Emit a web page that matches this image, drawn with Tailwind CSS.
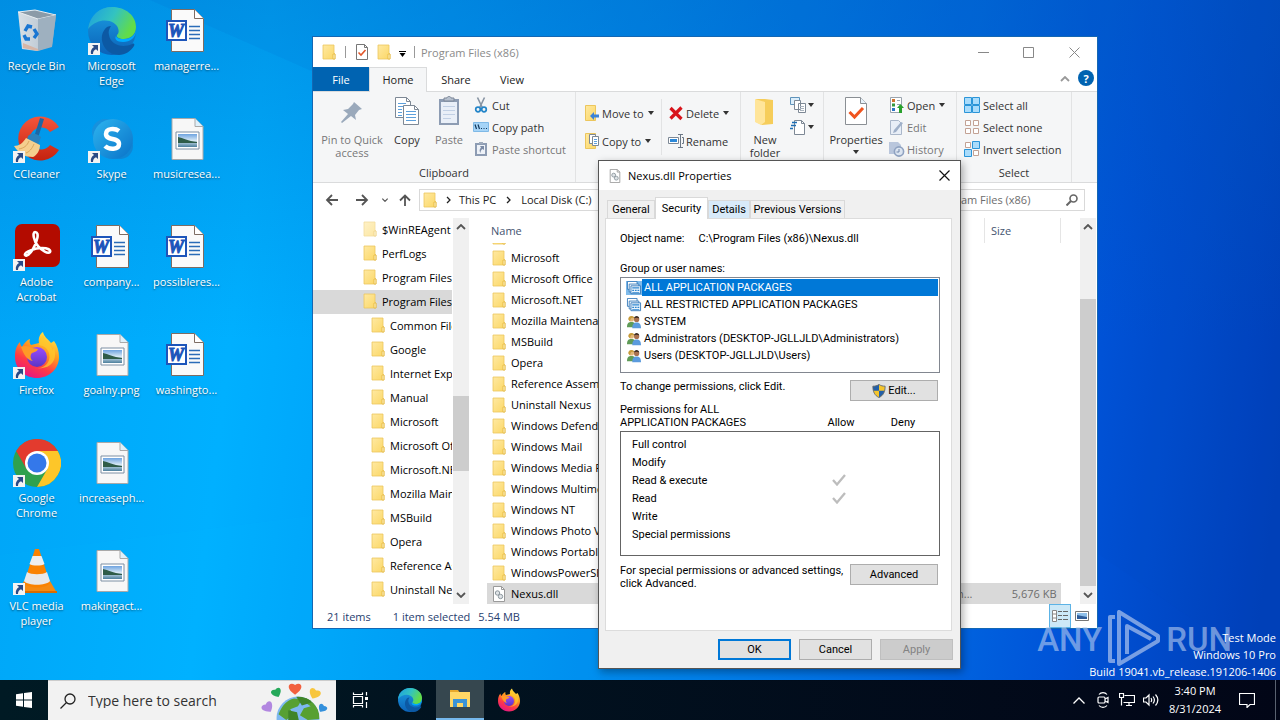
<!DOCTYPE html>
<html lang="en">
<head>
  <meta charset="UTF-8" />
  <meta name="viewport" content="width=device-width, initial-scale=1" />
  <title>Desktop</title>
  <script src="https://cdn.jsdelivr.net/npm/@tailwindcss/browser@4"></script>
</head>
<body class="flex min-h-screen flex-col overflow-hidden bg-[#0078d7] font-['Open_Sans','Noto_Sans',sans-serif] text-[11px] leading-[15px] text-black">

  <!-- icon sprite -->
  <svg class="absolute size-0" aria-hidden="true">
    <defs>
      <linearGradient id="g-folder" x1="0" y1="0" x2="1" y2="1"><stop offset="0" stop-color="#ffe9a2"/><stop offset="1" stop-color="#fbd765"/></linearGradient>
      <linearGradient id="g-edge1" x1="0" y1="0" x2="1" y2=".4"><stop offset="0" stop-color="#1b9de2"/><stop offset=".55" stop-color="#33c3c0"/><stop offset="1" stop-color="#62dc49"/></linearGradient>
      <linearGradient id="g-edge2" x1="0" y1="0" x2="0" y2="1"><stop offset="0" stop-color="#1b9de2"/><stop offset="1" stop-color="#0b62b8"/></linearGradient>
      <linearGradient id="g-bin" x1="0" y1="0" x2="1" y2="0"><stop offset="0" stop-color="#d8e0e6"/><stop offset=".5" stop-color="#c3ced8"/><stop offset="1" stop-color="#8fa3b3"/></linearGradient>
      <linearGradient id="g-cc" x1="0" y1="0" x2="0" y2="1"><stop offset="0" stop-color="#f4553b"/><stop offset="1" stop-color="#c5220f"/></linearGradient>
      <linearGradient id="g-skype" x1="0" y1="0" x2="1" y2="1"><stop offset="0" stop-color="#2db5f0"/><stop offset="1" stop-color="#0a72c8"/></linearGradient>
      <linearGradient id="g-fox" x1=".8" y1="0" x2=".3" y2="1"><stop offset="0" stop-color="#fff04a"/><stop offset=".4" stop-color="#ff9a1f"/><stop offset=".7" stop-color="#ff3a45"/><stop offset="1" stop-color="#e31587"/></linearGradient>
      <linearGradient id="g-fox2" x1="0" y1="0" x2="0" y2="1"><stop offset="0" stop-color="#9a4cff"/><stop offset="1" stop-color="#5b35c4"/></linearGradient>
      <linearGradient id="g-pic" x1="0" y1="0" x2="0" y2="1"><stop offset="0" stop-color="#6ea3e0"/><stop offset=".5" stop-color="#d6e8f5"/><stop offset="1" stop-color="#4c7f9c"/></linearGradient>
    </defs>

    <symbol id="folder" viewBox="0 0 16 16">
      <path d="M2 1h11v8l1 1v5H2z" fill="url(#g-folder)" stroke="#ecc65d" stroke-width=".8"/>
      <path d="M12 10h2v5h-2z" fill="#fff0b8" stroke="#e3b640" stroke-width=".8"/>
    </symbol>
    <symbol id="dll" viewBox="0 0 16 16">
      <path d="M2.500.5h8l3 3v12h-11z" fill="#fff" stroke="#9a9a9a"/>
      <path d="M10.500.5v3h3" fill="none" stroke="#9a9a9a"/>
      <circle cx="6.500" cy="7" r="2.200" fill="#dfe3e6" stroke="#8c979e"/><circle cx="9.500" cy="10.500" r="2.200" fill="#dfe3e6" stroke="#8c979e"/>
    </symbol>
    <symbol id="shortcut" viewBox="0 0 12 12">
      <path d="M0 0h12v12H0z" fill="#f3f3f3"/><path d="M4 2h6v6L8 6.200C6 7 5 8.500 5 11H3C2.300 8 3.500 5.500 6 4z" fill="#2a4a86"/>
    </symbol>

    <symbol id="bin" viewBox="0 0 48 48">
      <path d="M5 5l38 3-4 31-15 5-15-2z" fill="url(#g-bin)"/>
      <path d="M5 5l17-2 21 5-18 4z" fill="#8b9ba8" stroke="#e9eef2"/>
      <path d="M25 12l18-4-4 32-14 4z" fill="#9eb0bf"/><path d="M10 36l15 6v2l-15-3z" fill="#d6b6a7"/>
      <g fill="none" stroke="#1976d2" stroke-width="3.400"><path d="M12 24l3-5 4 1"/><path d="M21 22l3 5-3 4"/><path d="M17 32h-4l-2-4"/></g>
    </symbol>
    <symbol id="edge" viewBox="0 0 48 48">
      <circle cx="24" cy="24" r="24" fill="url(#g-edge2)"/>
      <path d="M0 22C2 8 12 0 24 0c14 0 24 9 24 20 0 8-6 12-12 12-5 0-8-2-7-4 2-2 2-4 1-7C28 14 12 8 0 22z" fill="url(#g-edge1)"/>
      <path d="M17 22c-8 10 0 26 14 26 6 0 12-4 15-9 1-2 0-3-2-2-10 5-22 0-23-9-1-3 0-6 2-9-2 0-5 1-6 3z" fill="#0c59a4"/>
      <path d="M48 23c0 8-6 12-13 12-6 0-9-3-7-6 1 3 5 3 8 3 6 0 11-3 12-9z" fill="#00aaff"/>
    </symbol>
    <symbol id="word" viewBox="0 0 48 48">
      <path d="M8.500 2.500h23l9 9v33h-32z" fill="#fafafa" stroke="#7d6c63"/><path d="M31.500 2.500v9h9" fill="#fff" stroke="#7d6c63"/>
      <path d="M26 19.500h11M26 23.500h11M26 27.500h11M26 31.500h11" stroke="#2b6cb8" stroke-width="1.300"/>
      <path d="M3 13h21v21H3z" fill="#1d55ba"/><path d="M5 15h17v17H5z" fill="#fff"/>
      <text x="13" y="29.500" font-family="Liberation Serif, serif" font-style="italic" font-weight="700" font-size="18" text-anchor="middle" fill="#1d55ba" stroke="#1d55ba" stroke-width="1">W</text>
    </symbol>
    <symbol id="picture" viewBox="0 0 48 48">
      <path d="M9 3.500h23l8 8v33H9z" fill="#f7f7f7" stroke="#a9a9a9"/><path d="M32 3.500v8h8" fill="#dff0fa" stroke="#a9a9a9"/>
      <path d="M13 17h23v17H13z" fill="#fff" stroke="#7d8fa3"/><path d="M15 19h19v13H15z" fill="url(#g-pic)"/>
      <path d="M15 22c5 1 10 4 19 5v1H15z" fill="#2f5c48"/>
    </symbol>
    <symbol id="ccleaner" viewBox="0 0 48 48">
      <path d="M46 12A22 22 0 1 0 46 35l-9-5A11 11 0 1 1 37 17z" fill="url(#g-cc)"/>
      <path d="M27 3l4 1-6 19-4-1z" fill="#1c67a5"/><path d="M15 21c4-4 8-3 13 1l-3 8-11-5z" fill="#2a82bd"/>
      <path d="M13 23l14 7c0 6-4 11-7 12-8 0-14-3-19-11 5 0 9-3 12-8z" fill="#f5cf8e"/><path d="M16 26c-2 5-5 7-10 8M21 29c-2 5-5 8-8 9" stroke="#d9a55c" fill="none"/>
    </symbol>
    <symbol id="skype" viewBox="0 0 48 48">
      <circle cx="17" cy="17" r="13" fill="#1791dd"/><circle cx="32" cy="31" r="13" fill="#0f86d4"/><circle cx="25" cy="24" r="20" fill="url(#g-skype)"/>
      <path d="M31 16c-4-3-13-3-13 3 0 7 13 3 13 10 0 6-10 6-14 2" fill="none" stroke="#fff" stroke-width="4.500"/>
    </symbol>
    <symbol id="acrobat" viewBox="0 0 48 48">
      <rect x="2" y="1" width="45" height="43" rx="7" fill="#b30b00"/>
      <path d="M22 9c5 0 2 10-2 17-3 5-7 8-8 6-1-3 10-7 17-7 6 0 9 2 8 4-2 2-8-1-12-6-4-4-6-14-3-14z" fill="none" stroke="#fff" stroke-width="2.600"/>
    </symbol>
    <symbol id="firefox" viewBox="0 0 48 48">
      <path d="M46 26c0 12-10 21-22 21S2 38 2 26c0-6 1-11 5-15 0 2 1 4 2 5 2-4 5-7 8-8-1 3 0 5 1 6l8-2c-1-5 1-9 4-11 1 5 5 7 8 11l3-2c3 4 5 10 5 16z" fill="url(#g-fox)"/>
      <circle cx="24" cy="26" r="10" fill="url(#g-fox2)"/>
      <path d="M8 16c4-2 8-1 11 1l6 1c-1 3-4 3-6 4-2 2-2 6 1 8-6-1-9-6-12-14z" fill="#ff9a26"/>
      <path d="M26 14c8 1 12 8 10 15-2 6-8 9-14 8 16 2 23-8 19-20-1 1-1 2-1 3-3-8-7-9-10-16-2 3-4 6-4 10z" fill="#ffca2c" fill-opacity=".75"/>
    </symbol>
    <symbol id="chrome" viewBox="0 0 48 48">
      <circle cx="24" cy="24" r="24" fill="#2fa14f"/>
      <path d="M24 24L3.200 12A24 24 0 0 1 44.800 12z" fill="#e33b2e"/><path d="M24 12h20.800A24 24 0 0 1 24 48l10.400-18z" fill="#fdc629"/>
      <path d="M3.200 12L13.600 30 24 24V12z" fill="#e33b2e"/>
      <circle cx="24" cy="24" r="12" fill="#fff"/><circle cx="24" cy="24" r="9.500" fill="#3478ea"/>
    </symbol>
    <symbol id="vlc" viewBox="0 0 48 48">
      <path d="M11 34h26l7 12H4z" fill="#f58a12"/><path d="M4 46h40v-2H5z" fill="#d96c00"/>
      <path d="M22 2h4l11 34c-4 6-22 6-26 0z" fill="#fa8200"/>
      <path d="M19.500 9h9l3 8c-3 2-12 2-15 0z" fill="#eee"/><path d="M14 25c4 3 16 3 20 0l3 9c-4 5-22 5-26 0z" fill="#e8e8e8"/>
    </symbol>

    <symbol id="pin" viewBox="0 0 32 32"><path d="M18 7l8 7-3 1-4 5 1 5-5-4-9 7-1-1 7-8-5-4 5-1 5-5z" fill="#9aa9bb"/></symbol>
    <symbol id="copy" viewBox="0 0 32 32">
      <g fill="#fff" stroke="#7d8895"><path d="M4.500 2.500h11l4 4v16h-15z"/><path d="M12.500 10.500h11l4 4v15h-15z"/></g>
      <path d="M7 8.500h8M7 11.500h5M7 14.500h4M7 17.500h4M7 20.500h4M15 16.500h10M15 19.500h10M15 22.500h10M15 25.500h10" stroke="#5da0dc"/><path d="M15.500 2.500v4h4M23.500 10.500v4h4" fill="none" stroke="#7d8895"/>
    </symbol>
    <symbol id="paste" viewBox="0 0 32 32">
      <path d="M6 4h20v26H6z" fill="#8d9cb3"/><path d="M8 7h16v21H8z" fill="#e9eff8"/><path d="M11 6V3h3c0-2 4-2 4 0h3v3z" fill="#b6c0ce" stroke="#7c8798"/>
      <path d="M10 11.500h12M10 15.500h12M10 19.500h12M10 23.500h8" stroke="#c1d0e5"/>
    </symbol>
    <symbol id="cut" viewBox="0 0 16 16"><path d="M4.500.5L9.500 11M11.500.5L6.500 11" stroke="#8794a3" stroke-width="1.600"/><g fill="none" stroke="#2385c9" stroke-width="1.700"><circle cx="5" cy="12.500" r="2.300"/><circle cx="11" cy="12.500" r="2.300"/></g></symbol>
    <symbol id="copypath" viewBox="0 0 16 16"><path d="M.5 3.500h15v9h-15z" fill="#a6d4f7" stroke="#7fb9e6"/><path d="M2 5.500l1.500 4.500M5 5.500l1.500 4.500M8 9.500h1M10.500 9.500h1M13 9.500h1" stroke="#12385c" stroke-width="1.200"/></symbol>
    <symbol id="pasteshort" viewBox="0 0 16 16"><path d="M2 2h12v13H2z" fill="#8d9cb3"/><path d="M4 4h8v9H4z" fill="#eef2f8"/><path d="M6 1h4v2H6z" fill="#9fabbc"/><path d="M7 5h4v4L9.500 8C8 9 7.500 10 7.500 12 6 10 6.500 8 8 6.500z" fill="#7b8ba6"/></symbol>
    <symbol id="moveto" viewBox="0 0 16 16"><path d="M1.500.5h10v15h-10z" fill="url(#g-folder)" stroke="#ecc65d"/><path d="M6 11l4-4v2.500h5v3h-5V15z" fill="#3c82d6"/></symbol>
    <symbol id="copyto" viewBox="0 0 16 16"><path d="M1.500.5h10v15h-10z" fill="url(#g-folder)" stroke="#ecc65d"/><path d="M5.500 1.500h6v9h-6z" fill="#fff" stroke="#7d8895"/><path d="M8.500 3.500h6v9h-6z" fill="#fff" stroke="#7d8895"/><path d="M10 6.500h3M10 8.500h3M10 10.500h3" stroke="#5da0dc"/></symbol>
    <symbol id="delete" viewBox="0 0 16 16"><path d="M2.500 3l11 11M13.500 2.500l-11 11" stroke="#d8141c" stroke-width="3.200"/></symbol>
    <symbol id="rename" viewBox="0 0 16 16"><path d="M.5 4.500h10v6H.5z" fill="#fff" stroke="#7d8895"/><path d="M2 6h7v3H2z" fill="#2b88d8"/><path d="M10 1.500h5M10 14.500h5M12.500 2v12M14 4.500h1.500v6H14" fill="none" stroke="#6b7785"/></symbol>
    <symbol id="bigfolder" viewBox="0 0 32 32"><path d="M7 4h9l8 1v24l-11 1-6-3z" fill="#f6cd5a"/><path d="M6 4l10 3v20l-4 3-6-3z" fill="#ffe59a"/></symbol>
    <symbol id="newitem" viewBox="0 0 16 16"><path d="M.5.5h9v7h-9z" fill="#dceefb" stroke="#5f93bb"/><path d="M4.500 3.500h6v9h-6zM8.500 6.500h7v9h-7z" fill="#fff" stroke="#7d8895"/><path d="M10 9.500h4M10 11.500h4M10 13.500h4" stroke="#aab4bf"/></symbol>
    <symbol id="easy" viewBox="0 0 16 16"><path d="M4.500 1.500h7l3 3v11h-10z" fill="#fff" stroke="#7d8895"/><path d="M11.500 1.500v3h3" fill="none" stroke="#7d8895"/><path d="M2 3.500h5M1 6.500h5M0 9.500h3" stroke="#1f6fb5" stroke-width="1.400"/></symbol>
    <symbol id="props" viewBox="0 0 32 32"><path d="M5.500 2.500h15l6 6v21h-21z" fill="#fff" stroke="#8a8f94"/><path d="M20.500 2.500v6h6" fill="#e8f3fb" stroke="#8a8f94"/><path d="M9.500 17l5 5 8.500-9" fill="none" stroke="#f0541e" stroke-width="3"/></symbol>
    <symbol id="props-small" viewBox="0 0 16 16"><path d="M2.500.5h8l3 3v12h-11z" fill="#fff" stroke="#777"/><path d="M10.500.5v3h3" fill="none" stroke="#777"/><path d="M4.500 8.500l2.500 2.500 4.500-5" fill="none" stroke="#e2572b" stroke-width="1.600"/></symbol>
    <symbol id="open" viewBox="0 0 16 16"><path d="M1.500.5h11v15h-11z" fill="#fff" stroke="#9aa4ae"/><path d="M3 2h3v3H3z" fill="#d1722c"/><path d="M3 6.500h3v3H3z" fill="#35993f"/><path d="M3 11h3v3H3z" fill="#2c75c4"/><path d="M8 3.500h3M8 7.500h3" stroke="#9aa4ae"/><path d="M8 11l3.500-4L15 11h-2v5h-3v-5z" fill="#29a12d"/></symbol>
    <symbol id="edit" viewBox="0 0 16 16"><path d="M1.500 1.500h8l3 3v11h-11z" fill="#e8eef7" stroke="#aab7ca"/><path d="M14 4L7 13l-3 1 1-3 7-8z" fill="#9fb0c9"/></symbol>
    <symbol id="history" viewBox="0 0 16 16"><path d="M0 1h9l3 3v9H0z" fill="#b9c6dc"/><circle cx="10" cy="10.500" r="4.600" fill="#dbe4f0" stroke="#8fa2c1" stroke-width="1.600"/><path d="M10 8v3H7.500" fill="none" stroke="#7287aa"/></symbol>
    <symbol id="selall" viewBox="0 0 16 16"><path d="M.5.5h7v7h-7zM8.500.5h7v7h-7zM.5 8.500h7v7h-7zM8.500 8.500h7v7h-7z" fill="#aadcfb" stroke="#2b95d8"/></symbol>
    <symbol id="selnone" viewBox="0 0 16 16"><path d="M1.500 1.500h5v5h-5zM9.500 1.500h5v5h-5zM1.500 9.500h5v5h-5zM9.500 9.500h5v5h-5z" fill="#fff" stroke="#c3a294"/></symbol>
    <symbol id="selinv" viewBox="0 0 16 16"><path d="M1.500 1.500h5v5h-5zM9.500 9.500h5v5h-5z" fill="#fff" stroke="#c3a294"/><path d="M8.500.5h7v7h-7zM.5 8.500h7v7h-7z" fill="#aadcfb" stroke="#2b95d8"/></symbol>
    <symbol id="caret" viewBox="0 0 6 4"><path d="M0 0h6L3 4z" fill="currentColor"/></symbol>
    <symbol id="chev-up" viewBox="0 0 10 6"><path d="M1 5l4-4 4 4" fill="none" stroke="currentColor" stroke-width="1.800"/></symbol>
    <symbol id="chev-down" viewBox="0 0 10 6"><path d="M1 1l4 4 4-4" fill="none" stroke="currentColor" stroke-width="1.800"/></symbol>
    <symbol id="chev-right" viewBox="0 0 5 8"><path d="M1 1l3 3-3 3" fill="none" stroke="currentColor" stroke-width="1.300"/></symbol>

    <symbol id="package" viewBox="0 0 16 16"><path d="M.5.5h11v9H.5z" fill="#fff" stroke="#2f76b8"/><path d="M2.500 3.500h11v9h-11z" fill="#fff" stroke="#2f76b8"/><path d="M4.500 5.500h11v9h-11z" fill="#eaf4fc" stroke="#2f76b8"/><path d="M6 7h8v1.500H6zM6 10h2v1.500H6zM9 10h2v1.500H9zM12 10h2v1.500h-2zM6 12.500h8v1H6z" fill="#2f86cf"/></symbol>
    <symbol id="group" viewBox="0 0 16 16"><circle cx="5" cy="4.500" r="3" fill="#e3b779"/><path d="M1.500 5C1 0 9 0 8.500 4 6 2 4 3 3.500 7z" fill="#c79b3a"/><path d="M0 14c0-5 2-6 5-6s5 1 5 6z" fill="#5f9b57"/><circle cx="11" cy="5" r="3" fill="#a9714f"/><path d="M8 4c0-4 6-4 6 0-2-1-4-1-6 0z" fill="#3a2a22"/><path d="M6 15c0-5 2-6.500 5-6.500s5 1.500 5 6.500z" fill="#5b9bdd"/></symbol>
    <symbol id="shield" viewBox="0 0 16 16"><path d="M8 .5C6 2 3.500 2.500 1 2.500 1 9 3 13 8 15.500 13 13 15 9 15 2.500 12.500 2.500 10 2 8 .5z" fill="#f5c52c"/><path d="M8 .5C6 2 3.500 2.500 1 2.500c0 2 .2 3.700.7 5.200H8zM8 7.700h6.300C13.300 11.300 11.500 13.800 8 15.500z" fill="#2460a8"/><path d="M8 .5C6 2 3.500 2.500 1 2.500 1 9 3 13 8 15.500 13 13 15 9 15 2.500 12.500 2.500 10 2 8 .5z" fill="none" stroke="#5d6672"/></symbol>
    <symbol id="tick" viewBox="0 0 14 12"><path d="M1 6l4 4.500L13 1" fill="none" stroke="#bdbdbd" stroke-width="2.300"/></symbol>
  </svg>

  <main class="relative flex-1 bg-[linear-gradient(97deg,#00a4f6_0%,#00b0ff_20%,#0092f0_45%,#006ae2_72%,#0053d8_84%,#003fb8_98%)]">
    <div class="absolute inset-0 bg-linear-to-b from-[#005bb5]/30 via-transparent via-50% to-transparent"></div>
    <svg class="absolute inset-0 size-full" viewBox="0 0 1280 680" preserveAspectRatio="none" aria-hidden="true">
      <path d="M150 0h1130v680L560 180z" fill="#004fc0" fill-opacity=".08"/>
      <path d="M0 555L600 480v200H0z" fill="#00bfff" fill-opacity=".08"/>
    </svg>

    <div id="desktop" class="relative grid w-fit auto-cols-[75px] grid-flow-col grid-rows-[repeat(6,108px)]"></div>

    <!-- Explorer -->
    <section class="absolute top-[37px] left-[313px] z-10 w-[784px] bg-white shadow-[0_0_0_1px_#1467b3]" aria-label="Program Files (x86)">
      <header class="flex h-[30px] items-center pl-2 text-[#8a8a8a]">
        <svg class="size-4"><use href="#folder"/></svg>
        <span class="ml-2 h-3 w-px bg-[#999]"></span>
        <button class="ml-2" aria-label="Properties"><svg class="size-4"><use href="#props-small"/></svg></button>
        <button class="ml-1.5" aria-label="New folder"><svg class="size-4"><use href="#folder"/></svg></button>
        <button class="ml-0.5 flex w-4 flex-col items-center gap-px pt-1 text-black" aria-label="Customize toolbar"><span class="h-px w-[7px] bg-black"></span><svg class="h-1 w-[7px]"><use href="#caret"/></svg></button>
        <span class="ml-1 h-3 w-px bg-[#999]"></span>
        <h1 class="ml-1.5">Program Files (x86)</h1>
        <div class="ml-auto flex">
          <button class="flex w-[46px] justify-center" aria-label="Minimize"><svg class="size-[11px]" viewBox="0 0 11 11"><path d="M0 5.500h11" stroke="#888"/></svg></button>
          <button class="flex w-[45px] justify-center" aria-label="Maximize"><svg class="size-[11px]" viewBox="0 0 11 11"><path d="M.5.5h10v10H.5z" fill="none" stroke="#888"/></svg></button>
          <button class="flex w-[46px] justify-center" aria-label="Close"><svg class="size-[11px]" viewBox="0 0 11 11"><path d="M.5.5l10 10M10.500.5l-10 10" stroke="#888"/></svg></button>
        </div>
      </header>

      <nav class="flex h-6 items-stretch text-[#222]">
        <button class="w-14 bg-[#0063b1] text-white">File</button>
        <button class="z-10 -mb-px w-[58px] border border-b-0 border-[#dadbdc] bg-[#f5f6f7] pb-0.5">Home</button>
        <button class="w-[58px]">Share</button>
        <button class="w-[54px]">View</button>
        <button class="mr-2 ml-auto text-[#999]" aria-label="Minimize the ribbon"><svg class="h-1.5 w-2.5"><use href="#chev-up"/></svg></button>
        <button class="mt-[3px] mr-[3px] size-4 rounded-full bg-[#0063b1] font-bold text-white" aria-label="Help">?</button>
      </nav>

      <div class="flex h-[92px] border-y border-[#dadbdc] bg-[#f5f6f7] whitespace-nowrap text-[#333]">
        <div class="flex w-[263px] flex-col border-r border-[#e2e3e4]">
          <div class="flex flex-1 pt-[3px] pl-1">
            <button class="flex w-[70px] flex-col items-center leading-[13px] text-[#777]"><svg class="mb-1.5 size-8"><use href="#pin"/></svg><span>Pin to Quick<br>access</span></button>
            <button class="flex w-[40px] flex-col items-center leading-[13px]"><svg class="mb-1.5 size-8"><use href="#copy"/></svg>Copy</button>
            <button class="flex w-[44px] flex-col items-center leading-[13px] text-[#777]"><svg class="mb-1.5 size-8"><use href="#paste"/></svg>Paste</button>
            <div class="flex flex-col">
              <button class="flex h-[22px] items-center gap-[3px] pb-0.5 pl-0.5"><svg class="size-4"><use href="#cut"/></svg>Cut</button>
              <button class="flex h-[22px] items-center gap-[3px] pb-0.5 pl-0.5"><svg class="size-4"><use href="#copypath"/></svg>Copy path</button>
              <button class="flex h-[22px] items-center gap-[3px] pb-0.5 pl-0.5 text-[#777]"><svg class="size-4"><use href="#pasteshort"/></svg>Paste shortcut</button>
            </div>
          </div>
          <p class="pb-0.5 text-center">Clipboard</p>
        </div>
        <div class="flex w-[165px] border-r border-[#e2e3e4] pt-[7px]">
          <div class="flex w-[85px] flex-col pl-2">
            <button class="flex h-7 items-center gap-0.5"><svg class="size-4"><use href="#moveto"/></svg>Move to<svg class="ml-0.5 h-1 w-1.5"><use href="#caret"/></svg></button>
            <button class="flex h-7 items-center gap-0.5"><svg class="size-4"><use href="#copyto"/></svg>Copy to<svg class="ml-0.5 h-1 w-1.5"><use href="#caret"/></svg></button>
          </div>
          <div class="flex h-14 flex-col border-l border-[#e2e3e4] pl-1.5">
            <button class="flex h-7 items-center gap-0.5"><svg class="size-4"><use href="#delete"/></svg>Delete<svg class="ml-0.5 h-1 w-1.5"><use href="#caret"/></svg></button>
            <button class="flex h-7 items-center gap-0.5"><svg class="size-4"><use href="#rename"/></svg>Rename</button>
          </div>
        </div>
        <div class="flex w-[83px] border-r border-[#e2e3e4] pt-[3px]">
          <button class="flex w-[48px] flex-col items-center self-start leading-[13px]"><svg class="mb-1.5 size-8"><use href="#bigfolder"/></svg><span>New<br>folder</span></button>
          <div class="flex flex-col">
            <button class="flex h-[22px] items-center gap-0.5 pb-0.5 pl-px" aria-label="New item"><svg class="size-4"><use href="#newitem"/></svg><svg class="h-1 w-1.5"><use href="#caret"/></svg></button>
            <button class="flex h-[22px] items-center gap-0.5 pb-0.5 pl-px" aria-label="Easy access"><svg class="size-4"><use href="#easy"/></svg><svg class="h-1 w-1.5"><use href="#caret"/></svg></button>
          </div>
        </div>
        <div class="flex w-[133px] border-r border-[#e2e3e4] pt-[3px]">
          <button class="flex w-[64px] flex-col items-center self-start leading-[13px]"><svg class="mb-1.5 size-8"><use href="#props"/></svg>Properties<svg class="mt-1 h-1 w-1.5"><use href="#caret"/></svg></button>
          <div class="flex flex-col">
            <button class="flex h-[22px] items-center gap-0.5 pb-0.5 pl-px"><svg class="size-4"><use href="#open"/></svg>Open<svg class="ml-0.5 h-1 w-1.5"><use href="#caret"/></svg></button>
            <button class="flex h-[22px] items-center gap-0.5 pb-0.5 pl-px text-[#777]"><svg class="size-4"><use href="#edit"/></svg>Edit</button>
            <button class="flex h-[22px] items-center gap-0.5 pb-0.5 pl-px text-[#777]"><svg class="size-4"><use href="#history"/></svg>History</button>
          </div>
        </div>
        <div class="flex w-[115px] flex-col border-r border-[#e2e3e4] pt-[3px]">
          <div class="flex flex-1 flex-col pl-[7px]">
            <button class="flex h-[22px] items-center gap-[3px] pb-0.5"><svg class="size-4"><use href="#selall"/></svg>Select all</button>
            <button class="flex h-[22px] items-center gap-[3px] pb-0.5"><svg class="size-4"><use href="#selnone"/></svg>Select none</button>
            <button class="flex h-[22px] items-center gap-[3px] pb-0.5"><svg class="size-4"><use href="#selinv"/></svg>Invert selection</button>
          </div>
          <p class="pb-0.5 text-center">Select</p>
        </div>
      </div>

      <div class="flex h-[35px] items-center pr-3 pb-0.5 pl-3 text-[#555]">
        <button class="w-[30px]" aria-label="Back"><svg class="h-3 w-3.5" viewBox="0 0 14 12"><path d="M13 6H2M7 1L2 6l5 5" fill="none" stroke="currentColor" stroke-width="1.800"/></svg></button>
        <button class="w-[26px]" aria-label="Forward"><svg class="h-3 w-3.5" viewBox="0 0 14 12"><path d="M1 6h11M7 1l5 5-5 5" fill="none" stroke="currentColor" stroke-width="1.800"/></svg></button>
        <button class="w-[18px]" aria-label="Recent locations"><svg class="h-1 w-2"><use href="#chev-down"/></svg></button>
        <button class="w-5" aria-label="Up"><svg class="size-3" viewBox="0 0 12 12"><path d="M6 12V2M1 6.500l5-5 5 5" fill="none" stroke="currentColor" stroke-width="1.800"/></svg></button>
        <div class="flex h-[22px] flex-1 items-center border border-[#d9d9d9] pl-0.5 whitespace-nowrap text-[#222]">
          <svg class="size-4"><use href="#folder"/></svg>
          <svg class="mx-2 h-2 w-[5px]"><use href="#chev-right"/></svg><a href="#">This PC</a>
          <svg class="mx-2.5 h-2 w-[5px]"><use href="#chev-right"/></svg><a href="#">Local Disk (C:)</a>
          <svg class="mx-2.5 h-2 w-[5px]"><use href="#chev-right"/></svg><a href="#">Program Files (x86)</a>
        </div>
        <label class="ml-1.5 flex h-[22px] w-[205px] items-center border border-[#d9d9d9] pr-1.5 pl-3.5">
          <input type="search" aria-label="Search Program Files (x86)" placeholder="Search Program Files (x86)" class="min-w-0 flex-1 outline-none placeholder:text-[#6d6d6d]" />
          <svg class="size-3" viewBox="0 0 12 12"><circle cx="7.500" cy="4.500" r="3.500" fill="none" stroke="#666" stroke-width="1.600"/><path d="M5 7L.5 11.500" stroke="#666" stroke-width="2"/></svg>
        </label>
      </div>

      <div class="flex h-[386px]">
        <nav id="tree" class="w-[139px] overflow-hidden whitespace-nowrap" aria-label="Folders"></nav>
        <div class="ml-px flex w-4 flex-col items-center bg-[#f0f0f0] text-[#555]">
          <svg class="mt-1.5 h-1.5 w-2.5"><use href="#chev-up"/></svg>
          <div class="mt-[166px] h-[75px] w-full bg-[#cdcdcd]"></div>
          <svg class="mt-auto mb-1.5 h-1.5 w-2.5"><use href="#chev-down"/></svg>
        </div>
        <div class="flex-1 pl-[18px]">
          <table class="w-[574px] table-fixed text-left whitespace-nowrap">
            <thead>
              <tr class="h-[25px] text-[#44546f]">
                <th class="border-r border-[#e5e5e5] pl-1 font-normal">Name</th>
                <th class="w-[120px] border-r border-[#e5e5e5] pl-1.5 font-normal">Date modified</th>
                <th class="w-[120px] border-r border-[#e5e5e5] pl-1.5 font-normal">Type</th>
                <th class="w-[76px] border-r border-[#e5e5e5] pl-1.5 font-normal">Size</th>
              </tr>
            </thead>
            <tbody id="files"></tbody>
          </table>
        </div>
        <div class="mr-px flex w-4 flex-col items-center bg-[#f0f0f0] text-[#555]">
          <svg class="mt-1.5 h-1.5 w-2.5"><use href="#chev-up"/></svg>
          <div class="mt-[69px] w-full flex-1 bg-[#cdcdcd]"></div>
          <svg class="my-1.5 h-1.5 w-2.5"><use href="#chev-down"/></svg>
        </div>
      </div>

      <footer class="flex h-6 items-center gap-[22px] pr-1 pl-3.5 text-[#27406f]">
        <span>21 items</span>
        <span class="flex gap-2"><span>1 item selected</span><span>5.54 MB</span></span>
        <div class="ml-auto flex h-full items-center">
          <button class="flex h-full w-[22px] items-center justify-center border border-[#5cb3e6] bg-[#cce8f7]" aria-label="Details view"><svg class="h-3 w-4" viewBox="0 0 16 12"><path d="M.5.5h4v11h-4zM.5 4h4M.5 8h4" fill="#fff" stroke="#888"/><path d="M6 1.500h4M11 1.500h5M6 5.500h4M11 5.500h5M6 9.500h4M11 9.500h5" stroke="#666"/></svg></button>
          <button class="flex w-[22px] items-center justify-center" aria-label="Large icons"><svg class="h-2.5 w-3.5" viewBox="0 0 14 10"><path d="M.5.5h13v9H.5z" fill="#fff" stroke="#777"/><path d="M2 2h10v6H2z" fill="#8fc0ea"/><path d="M2 4l10 2v2H2z" fill="#2f5c98"/></svg></button>
        </div>
      </footer>
    </section>

    <!-- Properties dialog -->
    <section role="dialog" aria-label="Nexus.dll Properties" class="absolute top-[160px] left-[598px] z-20 w-[363px] border border-[#555] bg-[#f0f0f0] font-[Roboto,sans-serif] leading-[13px] shadow-[2px_3px_8px_#0005]">
      <header class="flex h-[29px] items-center gap-[5px] bg-white pl-2 font-['Open_Sans',sans-serif]">
        <svg class="h-3.5 w-4"><use href="#dll"/></svg>
        <h2>Nexus.dll Properties</h2>
        <button class="mr-2.5 ml-auto" aria-label="Close"><svg class="size-[11px]" viewBox="0 0 11 11"><path d="M.5.5l10 10M10.500.5l-10 10" stroke="#111" stroke-width="1.200"/></svg></button>
      </header>

      <div class="px-1.5 pt-[7px]">
        <div role="tablist" class="flex h-[21px] items-end pl-0.5 whitespace-nowrap">
          <button role="tab" class="h-[18px] w-12 border border-b-0 border-[#d9d9d9]">General</button>
          <button role="tab" aria-selected="true" class="z-10 -mb-px h-[22px] w-[53px] border border-b-0 border-[#d9d9d9] bg-white">Security</button>
          <button role="tab" class="h-[18px] w-[42px] border border-b-0 border-[#d9d9d9] bg-[#d8eaf9]">Details</button>
          <button role="tab" class="h-[18px] w-[95px] border border-b-0 border-[#d9d9d9]">Previous Versions</button>
        </div>
        <div role="tabpanel" class="mr-0.5 h-[413px] border border-[#dcdcdc] bg-white px-3.5 pt-[13px] pr-[11px]">
          <p class="flex gap-3.5"><span>Object name:</span><span>C:\Program Files (x86)\Nexus.dll</span></p>
          <p class="mt-[17px]" id="names-label">Group or user names:</p>
          <ul role="listbox" aria-labelledby="names-label" class="mt-0.5 h-24 border border-[#828790] p-px">
            <li role="option" aria-selected="true" class="flex h-[17px] items-center pl-1"><svg class="h-3.5 w-4 bg-[#0078d7]/50"><use href="#package"/></svg><span class="flex h-full flex-1 items-center bg-[#0078d7] pl-0.5 text-white">ALL APPLICATION PACKAGES</span></li>
            <li role="option" class="flex h-[17px] items-center gap-0.5 pl-1"><svg class="h-3.5 w-4"><use href="#package"/></svg>ALL RESTRICTED APPLICATION PACKAGES</li>
            <li role="option" class="flex h-[17px] items-center gap-0.5 pl-1"><svg class="h-3.5 w-4"><use href="#group"/></svg>SYSTEM</li>
            <li role="option" class="flex h-[17px] items-center gap-0.5 pl-1"><svg class="h-3.5 w-4"><use href="#group"/></svg>Administrators (DESKTOP-JGLLJLD\Administrators)</li>
            <li role="option" class="flex h-[17px] items-center gap-0.5 pl-1"><svg class="h-3.5 w-4"><use href="#group"/></svg>Users (DESKTOP-JGLLJLD\Users)</li>
          </ul>
          <div class="mt-[7px] mr-0.5 flex items-start justify-between">
            <p>To change permissions, click Edit.</p>
            <button class="flex h-[21px] w-[88px] items-center justify-center gap-0.5 border border-[#adadad] bg-[#e1e1e1]"><svg class="size-3.5"><use href="#shield"/></svg>Edit...</button>
          </div>
          <div class="mt-0.5 flex items-end">
            <p class="flex-1" id="perm-label">Permissions for ALL<br>APPLICATION PACKAGES</p>
            <p class="w-[62px] text-center">Allow</p>
            <p class="mr-1.5 w-[62px] text-center">Deny</p>
          </div>
          <div class="mt-0.5 h-[125px] border border-[#646464] pt-[3px] pl-[11px]">
            <table class="w-full table-fixed text-left" aria-labelledby="perm-label">
              <tbody id="permissions"></tbody>
            </table>
          </div>
          <div class="mt-2 mr-0.5 flex items-start justify-between whitespace-nowrap">
            <p>For special permissions or advanced settings,<br>click Advanced.</p>
            <button class="h-[21px] w-[88px] border border-[#adadad] bg-[#e1e1e1]">Advanced</button>
          </div>
        </div>
      </div>
      <div class="flex justify-end gap-2 px-[7px] py-2">
        <button class="h-[21px] w-[73px] border-2 border-[#0078d7] bg-[#e1e1e1]">OK</button>
        <button class="h-[21px] w-[73px] border border-[#adadad] bg-[#e1e1e1]">Cancel</button>
        <button disabled class="h-[21px] w-[73px] border border-[#bfbfbf] bg-[#cccccc] text-[#838383]">Apply</button>
      </div>
    </section>

    <!-- watermark and build info -->
    <div class="absolute right-[48px] bottom-[10px] z-30 flex items-center gap-1 font-['Liberation_Sans_Narrow',Roboto,sans-serif] text-[33px] leading-[60px] font-medium text-[#b8cdf0]/60">
      <span>ANY</span>
      <svg class="h-[60px] w-[56px]" viewBox="0 0 56 60"><path d="M9 7H4v44h5M13 2v52l39-23v-5zM21 44V16l24 13" fill="none" stroke="#b8cdf0" stroke-opacity=".65" stroke-width="4" stroke-linejoin="round"/></svg>
      <span>RUN</span>
    </div>
    <div class="absolute right-1 bottom-0 z-30 text-right leading-[17px] text-white">
      <p>Test Mode</p>
      <p>Windows 10 Pro</p>
      <p>Build 19041.vb_release.191206-1406</p>
    </div>
  </main>

  <footer class="flex h-10 items-stretch bg-linear-to-r from-[#001a24] to-[#020617] text-white">
    <button class="flex w-12 items-center justify-center" aria-label="Start"><svg class="size-4" viewBox="0 0 16 16"><path d="M0 2.300l7-1v6.200H0zM8 1.100L16 0v7.500H8zM0 8.500h7v6.200l-7-1zM8 8.500h8V16l-8-1.100z" fill="#fff"/></svg></button>
    <label class="flex w-72 items-center overflow-hidden border-t border-[#ccc] bg-[#f2f2f2] pl-3">
      <svg class="size-4" viewBox="0 0 16 16"><circle cx="10" cy="6" r="5" fill="none" stroke="#222" stroke-width="1.300"/><path d="M6.500 9.500L.5 15.500" stroke="#222" stroke-width="1.300"/></svg>
      <input type="text" aria-label="Search" placeholder="Type here to search" class="ml-3 min-w-0 flex-1 text-[14px] outline-none placeholder:text-[#333]" />
      <svg class="h-full w-[76px]" viewBox="0 0 76 40" aria-hidden="true">
        <defs><path id="heart" d="M0 6C-11-1-6-8 0-4 6-8 11-1 0 6z"/><clipPath id="globe"><circle cx="38" cy="38" r="22"/></clipPath></defs>
        <circle cx="38" cy="38" r="22" fill="#7db8f0"/>
        <g clip-path="url(#globe)"><path d="M18 34c4-9 8-14 16-16l8 1-4 7-8 3 3 5-7 6zM48 15c8 4 12 13 12 24l-12 1-8-5 4-7 7-2-7-5z" fill="#57a032"/><path d="M28 30l9 2 2 9H28zM36 16h12l4 6-10 3z" fill="#3f8428"/></g>
        <use href="#heart" fill="#f2603f" transform="translate(35 8)"/><use href="#heart" fill="#26a95a" transform="translate(16 12) rotate(-25) scale(.8)"/>
        <use href="#heart" fill="#f8c63d" transform="translate(55 13) rotate(25) scale(.9)"/><use href="#heart" fill="#b287e0" transform="translate(7 27) rotate(-35) scale(.9)"/><use href="#heart" fill="#3490dc" transform="translate(63 28) rotate(35) scale(.7)"/>
      </svg>
    </label>
    <button class="flex w-12 items-center justify-center" aria-label="Task View"><svg class="h-4 w-[17px]" viewBox="0 0 17 16"><path d="M1.500.5v2h9v-2M1.500 15.500v-2h9v2M1.500 4.500h9v7h-9zM14.500 0v3.500M14.500 10v6" fill="none" stroke="#fff" stroke-width="1.200"/><path d="M13 5h3v3h-3z" fill="#fff"/></svg></button>
    <button class="flex w-[52px] items-center justify-center" aria-label="Microsoft Edge"><svg class="size-6"><use href="#edge"/></svg></button>
    <button class="flex w-12 items-center justify-center border-b-2 border-[#76b9ed] bg-[#36474f]" aria-label="File Explorer"><svg class="h-5 w-[22px]" viewBox="0 0 22 20"><path d="M1 1h8l2 3H1z" fill="#e8a92c"/><path d="M1 3h20v15H1z" fill="#ffd766"/><path d="M4 10h14v8h-4v-4H8v4H4z" fill="#3b93d6"/></svg></button>
    <button class="flex w-[50px] items-center justify-center" aria-label="Firefox"><svg class="size-6"><use href="#firefox"/></svg></button>
    <div class="ml-auto flex items-center">
      <button class="flex w-6 justify-center" aria-label="Show hidden icons"><svg class="h-[7px] w-3" viewBox="0 0 12 7"><path d="M.5 6.500L6 1l5.500 5.500" fill="none" stroke="#fff" stroke-width="1.300"/></svg></button>
      <button class="flex w-6 justify-center" aria-label="Meet Now"><svg class="h-4 w-3.5" viewBox="0 0 14 16"><rect x="2" y="5" width="7" height="6" rx="1" fill="none" stroke="#fff" stroke-width="1.200"/><path d="M9 7l3-1.500v5L9 9M3 2.500C5 0 9 0 11 2.500M3 13.500c2 2.500 6 2.500 8 0" fill="none" stroke="#fff" stroke-width="1.200"/></svg></button>
      <button class="flex w-6 justify-center" aria-label="Network"><svg class="h-3.5 w-4" viewBox="0 0 16 14"><path d="M5.500 2.500h10v7h-11M.5.500h4v4h-4zM2.500 4.500v8M10 9.500v3M7 12.500h6" fill="none" stroke="#fff" stroke-width="1.200"/></svg></button>
      <button class="flex w-6 justify-center" aria-label="Volume"><svg class="h-3.5 w-4" viewBox="0 0 16 14"><path d="M.5 5h2.500l3-3v10L3 9H.5zM8 5c1 1.500 1 2.500 0 4M10 3.500c2 2.500 2 4.500 0 7M12.500 1.500c3 3.500 3 7.500 0 11" fill="none" stroke="#fff" stroke-width="1.200"/></svg></button>
      <button class="w-16 text-center leading-[18px]">3:40 PM<br>8/31/2024</button>
      <button class="flex w-10 justify-center" aria-label="Notifications"><svg class="size-4" viewBox="0 0 16 16"><path d="M.5 1.500h15v11H11L8 15.500 8 12.500H.5z" fill="none" stroke="#fff" stroke-width="1.200"/></svg></button>
      <span class="mr-1 ml-2 h-10 w-px bg-[#5a6270]"></span>
    </div>
  </footer>

  <script>
    // filled column by column
    const shortcuts = [
      ['Recycle Bin', 'bin', false], ['CCleaner', 'ccleaner', true], ['Adobe Acrobat', 'acrobat', true],
      ['Firefox', 'firefox', true], ['Google Chrome', 'chrome', true], ['VLC media player', 'vlc', true],
      ['Microsoft Edge', 'edge', true], ['Skype', 'skype', true], ['company...', 'word', false],
      ['goalny.png', 'picture', false], ['increaseph...', 'picture', false], ['makingact...', 'picture', false],
      ['managerre...', 'word', false], ['musicresea...', 'picture', false], ['possibleres...', 'word', false],
      ['washingto...', 'word', false],
    ];

    document.getElementById('desktop').innerHTML = shortcuts.map(([label, icon, linked]) => `
      <button class="flex flex-col items-center self-start pt-[7px] pr-0.5 text-white">
        <span class="relative mb-[3px] size-12">
          <svg class="size-12"><use href="#${icon}"/></svg>
          ${linked ? '<svg class="absolute bottom-0 left-0 size-3"><use href="#shortcut"/></svg>' : ''}
        </span>
        <span class="w-[70px] [text-shadow:0_1px_2px_#0008]">${label}</span>
      </button>`).join('');

    const tree = ['$WinREAgent', 'PerfLogs', 'Program Files', 'Program Files (x86)'];
    const subtree = ['Common Files', 'Google', 'Internet Explorer', 'Manual', 'Microsoft', 'Microsoft Office', 'Microsoft.NET',
      'Mozilla Maintenance Service', 'MSBuild', 'Opera', 'Reference Assemblies', 'Uninstall Nexus'];

    document.getElementById('tree').innerHTML =
      tree.map((name, i) => `
        <a href="#" class="flex h-6 items-center gap-1 pb-0.5 pl-[49px] ${i === 3 ? 'bg-[#d9d9d9]' : ''}">
          <svg class="size-4 shrink-0 ${i === 0 ? 'opacity-60' : ''}"><use href="#folder"/></svg>${name}
        </a>`).join('') +
      subtree.map((name) => `
        <a href="#" class="flex h-6 items-center gap-1 pb-0.5 pl-[57px]">
          <svg class="size-4 shrink-0"><use href="#folder"/></svg>${name}
        </a>`).join('');

    const folders = ['Microsoft', 'Microsoft Office', 'Microsoft.NET', 'Mozilla Maintenance', 'MSBuild', 'Opera', 'Reference Assemblies',
      'Uninstall Nexus', 'Windows Defender', 'Windows Mail', 'Windows Media Player', 'Windows Multimedia', 'Windows NT',
      'Windows Photo Viewer', 'Windows Portable', 'WindowsPowerShell'];

    // the first row is the tail of a folder scrolled under the header
    document.getElementById('files').innerHTML = `
      <tr><td colspan="4" class="p-0"><div class="flex h-1 items-end overflow-hidden pb-0.5 pl-1"><svg class="size-4 shrink-0"><use href="#folder"/></svg></div></td></tr>` +
      folders.map((name) => `
        <tr class="h-[21px]">
          <td class="p-0 pl-1"><div class="flex items-center gap-1"><svg class="size-4 shrink-0"><use href="#folder"/></svg>${name}</div></td>
          <td></td><td></td><td></td>
        </tr>`).join('') + `
        <tr class="h-[21px] bg-[#d9d9d9]">
          <td class="p-0 pl-1"><div class="flex items-center gap-1"><svg class="size-4 shrink-0"><use href="#dll"/></svg>Nexus.dll</div></td>
          <td class="p-0 pl-1.5 text-[#6d6d6d]">8/31/2024 3:39 PM</td>
          <td class="p-0 pr-3 text-right text-[#6d6d6d]">Application exten...</td>
          <td class="p-0 pr-1 text-right text-[#6d6d6d]">5,676 KB</td>
        </tr>`;

    const permissions = [['Full control', false], ['Modify', false], ['Read & execute', true], ['Read', true], ['Write', false], ['Special permissions', false]];

    document.getElementById('permissions').innerHTML = permissions.map(([name, allowed]) => `
      <tr class="h-[18px]">
        <th scope="row" class="p-0 font-normal">${name.replace('&', '&amp;')}</th>
        <td class="w-[62px] p-0">${allowed ? '<svg role="img" aria-label="Allowed" class="ml-[17px] h-3 w-3.5"><use href="#tick"/></svg>' : ''}</td>
        <td class="w-[62px] p-0"></td>
      </tr>`).join('');
  </script>
</body>
</html>
